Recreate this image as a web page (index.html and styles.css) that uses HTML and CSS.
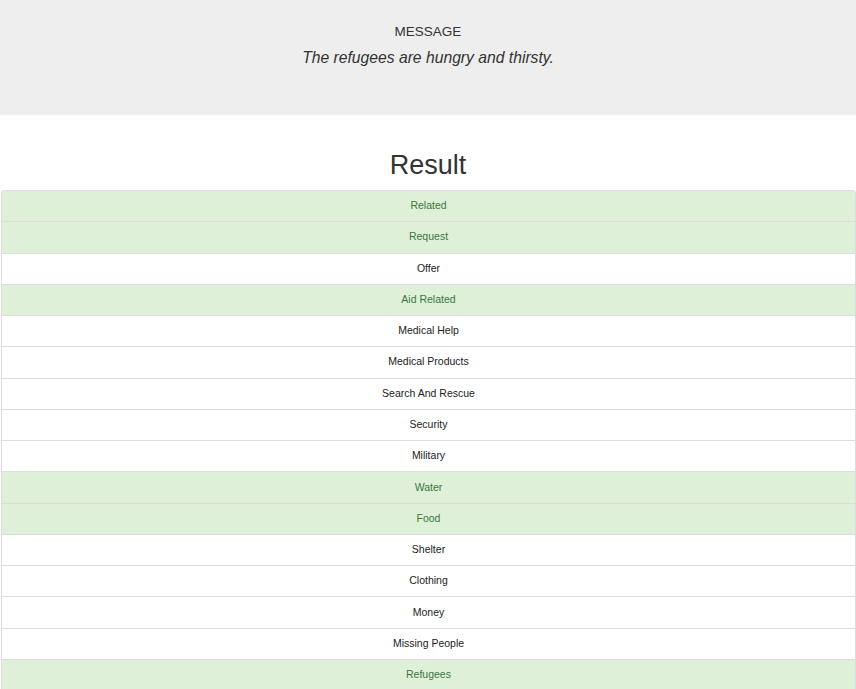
FILE: index.html
```html
<!DOCTYPE html>
<html>
<head>
<meta charset="utf-8">
<link rel="stylesheet" href="styles.css">
</head>
<body>
<div class="jumbotron">
  <h4 class="msg-title">MESSAGE</h4>
  <p class="msg-text"><i>The refugees are hungry and thirsty.</i></p>
</div>
<h1 class="result">Result</h1>
<ul class="list-group">
  <li class="item success">Related</li>
  <li class="item success">Request</li>
  <li class="item">Offer</li>
  <li class="item success">Aid Related</li>
  <li class="item">Medical Help</li>
  <li class="item">Medical Products</li>
  <li class="item">Search And Rescue</li>
  <li class="item">Security</li>
  <li class="item">Military</li>
  <li class="item success">Water</li>
  <li class="item success">Food</li>
  <li class="item">Shelter</li>
  <li class="item">Clothing</li>
  <li class="item">Money</li>
  <li class="item">Missing People</li>
  <li class="item success">Refugees</li>
  <li class="item">Death</li>
  <li class="item success">Other Aid</li>
  <li class="item">Infrastructure Related</li>
  <li class="item">Transport</li>
  <li class="item">Buildings</li>
  <li class="item">Electricity</li>
  <li class="item">Tools</li>
  <li class="item">Hospitals</li>
  <li class="item">Shops</li>
  <li class="item">Aid Centers</li>
  <li class="item">Other Infrastructure</li>
  <li class="item">Weather Related</li>
  <li class="item">Floods</li>
  <li class="item">Storm</li>
  <li class="item">Fire</li>
  <li class="item">Earthquake</li>
  <li class="item">Cold</li>
  <li class="item">Other Weather</li>
  <li class="item">Direct Report</li>
</ul>
</body>
</html>
```
FILE: styles.css
```css
html, body {
  margin: 0;
  padding: 0;
  background: #fff;
  font-family: "Liberation Sans", Arial, sans-serif;
  color: #333;
}
.jumbotron {
  background: #eeeeee;
  height: 115px;
  padding-top: 24px;
  box-sizing: border-box;
  text-align: center;
}
.msg-title {
  margin: 0;
  font-size: 13.5px;
  line-height: 16px;
  font-weight: normal;
  color: #333;
}
.msg-text {
  margin: 8px 0 0;
  font-size: 15.7px;
  line-height: 19px;
  color: #333;
}
.result {
  margin: 35px 0 0;
  font-size: 27px;
  line-height: 30px;
  height: 40px;
  font-weight: normal;
  text-align: center;
  color: #333;
}
.list-group {
  list-style: none;
  margin: 0 0 0 1px;
  padding: 0;
  width: 855px;
}
.item {
  box-sizing: border-box;
  height: 32.27px;
  padding-bottom: 2px;
  margin-bottom: -1px;
  border: 1px solid #dddddd;
  background: #fff;
  color: #222;
  font-size: 10.5px;
  display: flex;
  align-items: center;
  justify-content: center;
}
.item:first-child {
  border-top-left-radius: 3px;
  border-top-right-radius: 3px;
}
.item.success {
  background: #dff0d8;
  color: #3c763d;
}
```
